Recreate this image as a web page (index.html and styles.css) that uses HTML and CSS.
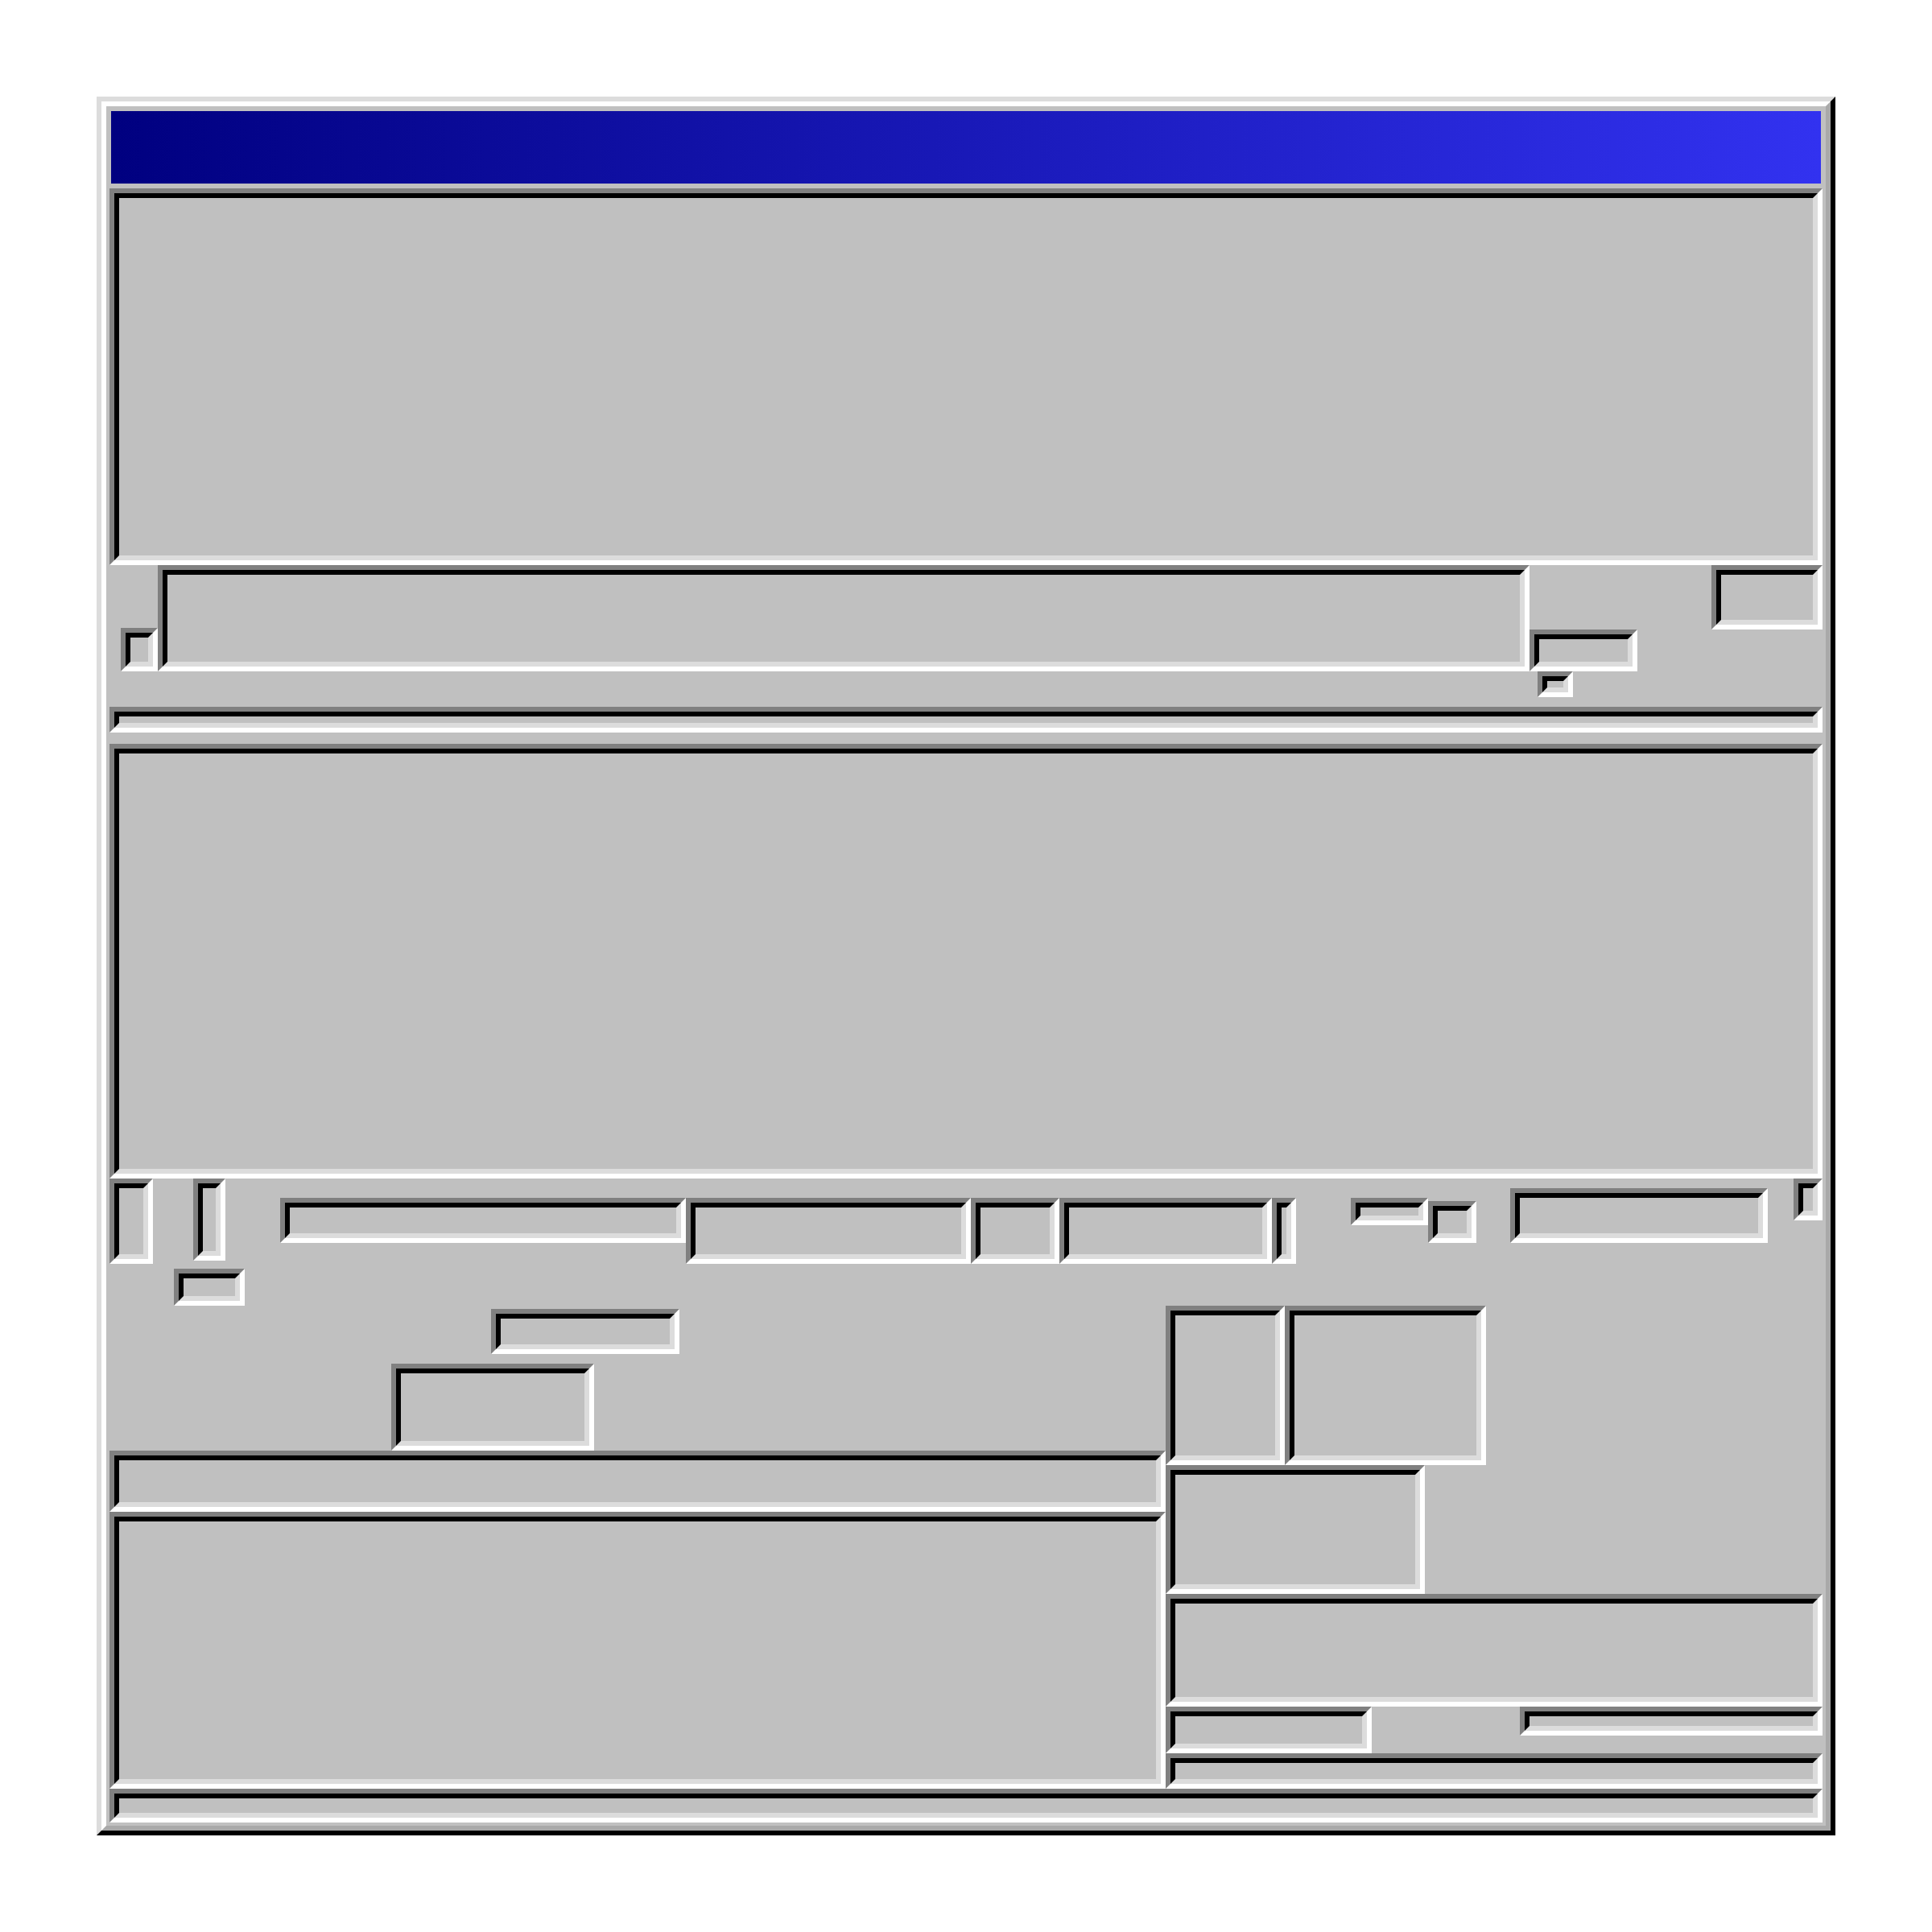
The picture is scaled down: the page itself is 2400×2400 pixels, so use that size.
FILE: index.html
```html
<!DOCTYPE html>
<html lang="en">
<head>
<meta charset="utf-8">
<title>Window</title>
<link rel="stylesheet" href="styles.css">
</head>
<body>
<div class="window">
  <div class="titlebar"></div>
  <div class="s panel1"></div>
  <div class="row3">
    <div class="s r3-small"></div>
    <div class="s r3-large"></div>
    <div class="r3-stack">
      <div class="s r3-box"></div>
      <div class="s r3-tiny"></div>
    </div>
    <div class="s r3-right"></div>
  </div>
  <div class="s bar"></div>
  <div class="s panel2"></div>
  <div class="band">
    <div class="band-row">
      <div class="s ba"></div>
      <div class="s bb"></div>
      <div class="s bc"></div>
      <div class="s bd"></div>
      <div class="s be"></div>
      <div class="s bf"></div>
      <div class="s bg"></div>
      <div class="s bi"></div>
      <div class="s bj"></div>
      <div class="s bk"></div>
      <div class="s bl"></div>
    </div>
    <div class="s bh"></div>
  </div>
  <div class="split">
    <div class="left">
      <div class="s b8"></div>
      <div class="s b9"></div>
      <div class="s b11"></div>
      <div class="s b12"></div>
    </div>
    <div class="right">
      <div class="r-row10">
        <div class="s b10a"></div>
        <div class="s b10b"></div>
      </div>
      <div class="s b13"></div>
      <div class="s b14"></div>
      <div class="r-row15">
        <div class="s b15a"></div>
        <div class="s b15b"></div>
      </div>
      <div class="s b16"></div>
    </div>
  </div>
  <div class="s foot"></div>
</div>
</body>
</html>
```
FILE: styles.css
```css
html, body {
  margin: 0;
  padding: 0;
  background: #ffffff;
  font-family: "Liberation Sans", Arial, sans-serif;
}

.window {
  position: relative;
  box-sizing: border-box;
  width: 2160px;
  height: 2160px;
  margin: 120px;
  padding: 12px 10px 10px 10px;
  background: #c0c0c0;
  border: 6px solid;
  border-color: #dcdcdc #000000 #000000 #dcdcdc;
  display: flex;
  flex-direction: column;
}

.window::before {
  content: "";
  position: absolute;
  inset: 0;
  border: 6px solid;
  border-color: #ffffff #a9a9a9 #a9a9a9 #ffffff;
  pointer-events: none;
}

.titlebar {
  height: 90px;
  margin: 0 2px;
  flex: none;
  background: linear-gradient(to right, #000080, #3232f0);
}

/* sunken bevel box */
.s {
  position: relative;
  box-sizing: border-box;
  flex: none;
  background: #c0c0c0;
  border: 6px solid;
  border-color: #808080 #ffffff #ffffff #808080;
}

.s::before {
  content: "";
  position: absolute;
  inset: 0;
  border: 6px solid;
  border-color: #000000 #dcdcdc #dcdcdc #000000;
  pointer-events: none;
}

.panel1 { margin-top: 6px; height: 468px; }

.row3 {
  height: 176px;
  flex: none;
  display: flex;
  align-items: flex-start;
}
.r3-small { margin-left: 14px; margin-top: 78px; width: 46px; height: 54px; }
.r3-large { width: 1704px; height: 132px; }
.r3-stack { display: flex; flex-direction: column; align-items: flex-start; margin-top: 80px; }
.r3-box { width: 134px; height: 52px; }
.r3-tiny { margin-left: 10px; width: 44px; height: 32px; }
.r3-right { margin-left: auto; width: 138px; height: 80px; }

.bar { height: 32px; }
.panel2 { margin-top: 14px; height: 540px; }

.band {
  height: 158px;
  flex: none;
  display: flex;
  flex-direction: column;
  align-items: flex-start;
}
.band-row {
  height: 106px;
  width: 100%;
  display: flex;
  align-items: flex-start;
}
.ba { width: 54px; height: 106px; }
.bb { margin-left: 50px; width: 40px; height: 102px; }
.bc { margin-left: 68px; margin-top: 24px; width: 504px; height: 56px; }
.bd { margin-top: 24px; width: 354px; height: 82px; }
.be { margin-top: 24px; width: 110px; height: 82px; }
.bf { margin-top: 24px; width: 264px; height: 82px; }
.bg { margin-top: 24px; width: 30px; height: 82px; }
.bi { margin-left: 68px; margin-top: 24px; width: 96px; height: 34px; }
.bj { margin-top: 28px; width: 60px; height: 52px; }
.bk { margin-left: 42px; margin-top: 12px; width: 320px; height: 68px; }
.bl { margin-left: 32px; width: 36px; height: 52px; }
.bh { margin-left: 80px; margin-top: 6px; width: 88px; height: 46px; }

.split {
  height: 600px;
  flex: none;
  display: grid;
  grid-template-columns: 1312px 816px;
}
.left, .right {
  display: flex;
  flex-direction: column;
  align-items: flex-start;
}
.b8 { margin-left: 474px; margin-top: 4px; width: 234px; height: 56px; }
.b9 { margin-left: 350px; margin-top: 12px; width: 252px; height: 108px; }
.b11 { width: 1312px; height: 76px; }
.b12 { width: 1312px; height: 344px; }

.r-row10 { display: flex; height: 198px; }
.b10a { width: 148px; height: 198px; }
.b10b { width: 250px; height: 198px; }
.b13 { width: 322px; height: 160px; }
.b14 { width: 816px; height: 140px; }
.r-row15 { display: flex; align-items: flex-start; height: 58px; }
.b15a { width: 256px; height: 58px; }
.b15b { margin-left: 184px; width: 376px; height: 36px; }
.b16 { width: 816px; height: 44px; }

.foot { height: 42px; }
```
